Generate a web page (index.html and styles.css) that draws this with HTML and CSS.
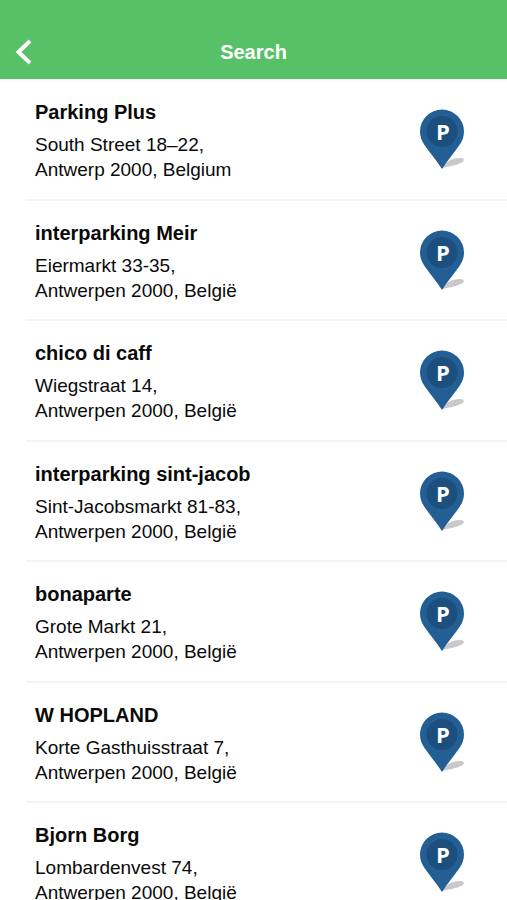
FILE: index.html
```html
<!DOCTYPE html>
<html lang="en">
<head>
<meta charset="utf-8">
<meta name="viewport" content="width=device-width, initial-scale=1">
<title>Search</title>
<link rel="stylesheet" href="styles.css">
</head>
<body>
<svg class="symbols" aria-hidden="true">
  <symbol id="pin" viewBox="0 0 46 62">
    <path class="pin-shadow" d="M23 60C26 54 33 50 41 50C46 50 46 53 42 55C37 57.500 29 58.500 23 60Z"/>
    <path class="pin-body" d="M23 61C18 53 11 45 5.500 37C2.500 32.500 1 28.500 1 23.500A22 22 0 0 1 45 23.500C45 28.500 43.500 32.500 40.500 37C35 45 28 53 23 61Z"/>
    <circle class="pin-disc" cx="23" cy="23.500" r="15.500"/>
  </symbol>
</svg>
<header class="bar">
  <button class="back" type="button" aria-label="Back">
    <svg class="chevron" viewBox="0 0 18 28" aria-hidden="true"><path d="M15 3L3.500 14L15 25"/></svg>
  </button>
  <h1 class="title">Search</h1>
</header>
<main>
  <ul class="places">
    <li class="place"><div class="info"><h2 class="name">Parking Plus</h2><address class="address">South Street 18–22,<br>Antwerp 2000, Belgium</address></div><svg class="pin" viewBox="0 0 46 62"><use href="#pin"/><text class="pin-letter" x="24" y="32">P</text></svg></li>
    <li class="place"><div class="info"><h2 class="name">interparking Meir</h2><address class="address">Eiermarkt 33-35,<br>Antwerpen 2000, België</address></div><svg class="pin" viewBox="0 0 46 62"><use href="#pin"/><text class="pin-letter" x="24" y="32">P</text></svg></li>
    <li class="place"><div class="info"><h2 class="name">chico di caff</h2><address class="address">Wiegstraat 14,<br>Antwerpen 2000, België</address></div><svg class="pin" viewBox="0 0 46 62"><use href="#pin"/><text class="pin-letter" x="24" y="32">P</text></svg></li>
    <li class="place"><div class="info"><h2 class="name">interparking sint-jacob</h2><address class="address">Sint-Jacobsmarkt 81-83,<br>Antwerpen 2000, België</address></div><svg class="pin" viewBox="0 0 46 62"><use href="#pin"/><text class="pin-letter" x="24" y="32">P</text></svg></li>
    <li class="place"><div class="info"><h2 class="name">bonaparte</h2><address class="address">Grote Markt 21,<br>Antwerpen 2000, België</address></div><svg class="pin" viewBox="0 0 46 62"><use href="#pin"/><text class="pin-letter" x="24" y="32">P</text></svg></li>
    <li class="place"><div class="info"><h2 class="name">W HOPLAND</h2><address class="address">Korte Gasthuisstraat 7,<br>Antwerpen 2000, België</address></div><svg class="pin" viewBox="0 0 46 62"><use href="#pin"/><text class="pin-letter" x="24" y="32">P</text></svg></li>
    <li class="place"><div class="info"><h2 class="name">Bjorn Borg</h2><address class="address">Lombardenvest 74,<br>Antwerpen 2000, België</address></div><svg class="pin" viewBox="0 0 46 62"><use href="#pin"/><text class="pin-letter" x="24" y="32">P</text></svg></li>
  </ul>
</main>
</body>
</html>
```
FILE: styles.css
```css
* {
  box-sizing: border-box;
}

html {
  scrollbar-width: none;
}

body {
  margin: 0;
  background: #fff;
  color: #0a0a0a;
  font-family: "Liberation Sans", Arial, sans-serif;
}

.symbols {
  display: block;
  width: 0;
  height: 0;
}

.bar {
  display: grid;
  grid-template-columns: 48px 1fr 48px;
  align-items: center;
  padding: 25px 0 1px;
  background: #57c167;
  color: #fff;
}

.back {
  display: flex;
  align-items: center;
  height: 53px;
  padding: 0 0 0 15px;
  border: 0;
  background: none;
  color: inherit;
}

.chevron {
  width: 18px;
  height: 28px;
  fill: none;
  stroke: currentColor;
  stroke-width: 4;
}

.title {
  margin: 0;
  font-size: 20px;
  line-height: 24px;
  text-align: center;
}

.places {
  display: grid;
  grid-auto-rows: minmax(121px, auto) minmax(120px, auto);
  margin: 0;
  padding: 1px 0 0 26px;
  list-style: none;
}

.place {
  display: flex;
  justify-content: space-between;
  align-items: flex-start;
  padding: 20px 42px 0 9px;
  border-bottom: 2px solid #f3f3f3;
}

.name {
  margin: 0 0 8px;
  font-size: 20px;
  line-height: 24px;
}

.address {
  font-size: 19px;
  font-style: normal;
  line-height: 25px;
}

.pin {
  flex: none;
  width: 46px;
  height: 62px;
  margin-top: 8px;
}

.pin-shadow {
  fill: #c9c9c9;
}

.pin-body {
  fill: #235f94;
}

.pin-disc {
  fill: #1c4f7e;
}

.pin-letter {
  fill: #fff;
  font: bold 22px "Open Sans", sans-serif;
  text-anchor: middle;
}
```
